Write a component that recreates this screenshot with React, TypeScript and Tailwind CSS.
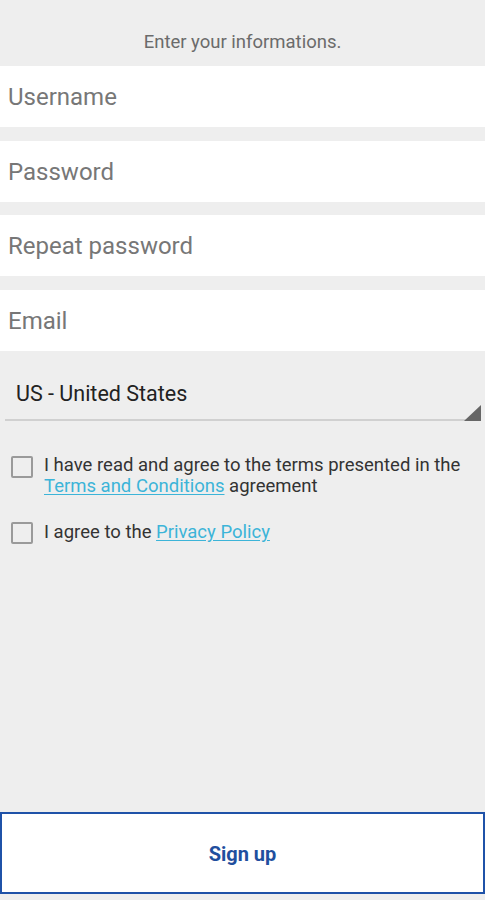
import React, { useState } from 'react';

const fields = ['Username', 'Password', 'Repeat password', 'Email'];

const App: React.FC = () => {
  const [terms, setTerms] = useState(false);
  const [privacy, setPrivacy] = useState(false);

  return (
    <div className="w-[485px] h-[900px] bg-[#eeeeee] flex flex-col font-['Roboto',sans-serif]">
      {/* Header */}
      <div className="h-[66px] flex items-end justify-center pb-[14px]">
        <p className="text-[18.5px] leading-[20px] text-[#6b6b6b]">Enter your informations.</p>
      </div>

      {/* Inputs */}
      <div className="flex flex-col gap-[13.5px]">
        {fields.map((f) => (
          <input
            key={f}
            placeholder={f}
            type={f.toLowerCase().includes('password') ? 'password' : 'text'}
            className="h-[61px] w-full bg-white px-[8px] pt-[1px] text-[24px] text-[#333] placeholder:text-[#777] outline-none"
          />
        ))}
      </div>

      {/* Country select */}
      <div className="mt-[26px] mx-[5px] relative border-b-2 border-[#d0d0d0] h-[44px] flex items-center pl-[11px] pb-[6px]">
        <span className="text-[21.5px] text-[#222]">US - United States</span>
        <svg className="absolute right-[-1px] bottom-[-2px]" width="17" height="16" viewBox="0 0 17 16">
          <polygon points="17,0 17,16 0,16" fill="#666" />
        </svg>
      </div>

      {/* Checkboxes */}
      <div className="mt-[34px] flex flex-col gap-[25px] px-[11px]">
        <label className="flex items-start gap-[11px] cursor-pointer">
          <input
            type="checkbox"
            checked={terms}
            onChange={() => setTerms(!terms)}
            className="appearance-none mt-[1px] w-[22px] h-[22px] shrink-0 border-2 border-[#9a9a9a] rounded-[2px] bg-transparent"
          />
          <span className="text-[18.5px] leading-[21px] text-[#333]">
            I have read and agree to the terms presented in the{' '}
            <a className="text-[#3cb4d8] underline underline-offset-2">Terms and Conditions</a> agreement
          </span>
        </label>
        <label className="flex items-start gap-[11px] cursor-pointer">
          <input
            type="checkbox"
            checked={privacy}
            onChange={() => setPrivacy(!privacy)}
            className="appearance-none w-[22px] h-[22px] shrink-0 border-2 border-[#9a9a9a] rounded-[2px] bg-transparent"
          />
          <span className="text-[18.5px] leading-[21px] text-[#333]">
            I agree to the <a className="text-[#3cb4d8] underline underline-offset-2">Privacy Policy</a>
          </span>
        </label>
      </div>

      <div className="flex-1" />

      {/* Footer */}
      <button className="h-[82px] w-full bg-white border-2 border-[#1f52a8] text-[#1f4f9e] text-[20px] font-bold pt-[2px] mb-[6px]">
        Sign up
      </button>
    </div>
  );
};

export default App;
